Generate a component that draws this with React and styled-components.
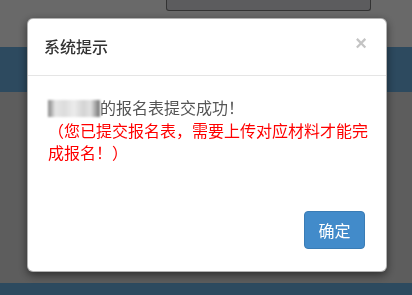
import React from 'react';
import styled, { createGlobalStyle } from 'styled-components';

const GlobalStyle = createGlobalStyle`
  html, body {
    margin: 0;
    padding: 0;
    height: 100%;
    overflow: hidden;
  }
  body {
    font-family: "Noto Sans CJK SC", "Noto Sans", sans-serif;
  }
`;

const Page = styled.div`
  height: 295px;
  display: flex;
  flex-direction: column;
  background: #bababa;
`;

const TopStrip = styled.div`
  height: 47px;
  background: #d2d2d2;
  display: flex;
  padding-left: 166px;
  box-sizing: border-box;
`;

const SearchInput = styled.div`
  width: 205px;
  height: 11px;
  box-sizing: border-box;
  background: #b8b8bc;
  border: 1px solid #666;
  border-top: none;
  border-radius: 0 0 3px 3px;
`;

const Band = styled.div`
  height: ${(p) => p.$h}px;
  background: #5a94be;
  flex-shrink: 0;
`;

const Content = styled.div`
  flex: 1;
  background: #bababa;
`;

const Backdrop = styled.div`
  position: fixed;
  inset: 0;
  background: rgba(0, 0, 0, 0.5);
`;

const Dialog = styled.div`
  position: fixed;
  top: 18px;
  left: 27px;
  width: 360px;
  height: 254px;
  box-sizing: border-box;
  background: #fff;
  border: 1px solid rgba(0, 0, 0, 0.3);
  border-radius: 6px;
  box-shadow: 0 3px 9px rgba(0, 0, 0, 0.5);
  display: flex;
  flex-direction: column;
`;

const Header = styled.div`
  height: 57px;
  box-sizing: border-box;
  border-bottom: 1px solid #e5e5e5;
  display: flex;
  align-items: center;
  justify-content: space-between;
  padding: 0 19px 2px 16px;
`;

const Title = styled.h4`
  margin: 0;
  font-size: 16px;
  font-weight: 500;
  color: #333;
  line-height: 22px;
`;

const Close = styled.span`
  font-family: "Liberation Sans", Arial, sans-serif;
  font-size: 20px;
  font-weight: 700;
  color: #c4c4c4;
  line-height: 1;
  margin-top: -6px;
`;

const Body = styled.div`
  padding: 20px 16px 0 20px;
  font-size: 16px;
  line-height: 22.5px;
  color: #555;
  flex: 1;
`;

const Masked = styled.span`
  display: inline-block;
  width: 52px;
  height: 17px;
  vertical-align: -3px;
  background: linear-gradient(
    90deg,
    #888 0,
    #aaa 6%,
    #e6e6e6 14%,
    #dcdcdc 32%,
    #ececec 50%,
    #d4d4d4 68%,
    #e2e2e2 82%,
    #888 96%,
    #777 100%
  );
  filter: blur(1.2px);
`;

const Notice = styled.span`
  color: #ff0000;
`;

const Footer = styled.div`
  display: flex;
  justify-content: flex-end;
  padding: 0 21px 22px;
`;

const Button = styled.button`
  width: 61px;
  height: 38px;
  border: 1px solid #3a7cb5;
  border-radius: 4px;
  background: #428bca;
  color: #fff;
  font-family: "Noto Sans CJK SC", sans-serif;
  font-size: 16px;
  padding: 0;
  cursor: pointer;
`;

export default function App() {
  return (
    <>
      <GlobalStyle />
      <Page>
        <TopStrip>
          <SearchInput />
        </TopStrip>
        <Band $h={45} />
        <Content />
        <Band $h={12} />
      </Page>
      <Backdrop />
      <Dialog>
        <Header>
          <Title>系统提示</Title>
          <Close>×</Close>
        </Header>
        <Body>
          <Masked />的报名表提交成功！
          <br />
          <Notice>（您已提交报名表，需要上传对应材料才能完成报名！）</Notice>
        </Body>
        <Footer>
          <Button>确定</Button>
        </Footer>
      </Dialog>
    </>
  );
}
